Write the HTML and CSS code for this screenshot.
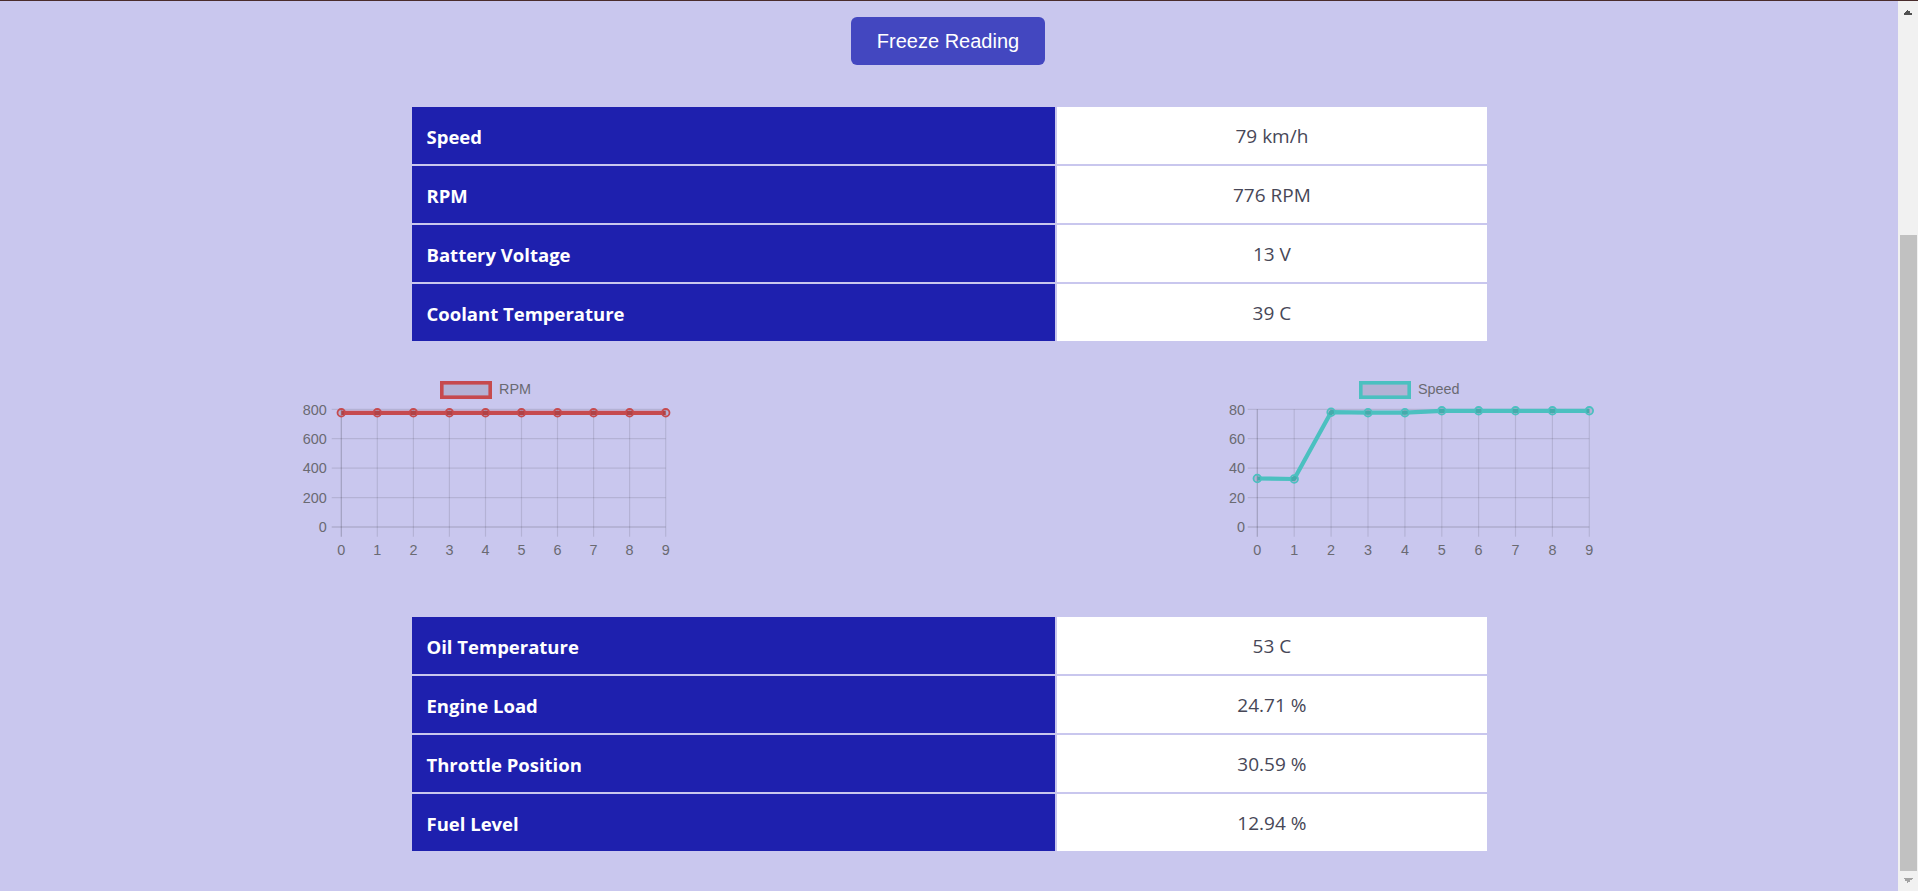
FILE: index.html
```html
<!DOCTYPE html>
<html lang="en">
<head>
<meta charset="utf-8">
<title>Live Readings</title>
<link rel="stylesheet" href="styles.css">
</head>
<body>
<div class="frame">
<div class="viewport">
  <div class="page">
    <header class="page-top"></header>

    <div class="controls">
      <button class="freeze-btn" type="button">Freeze Reading</button>
    </div>

    <table class="readings">
      <tr><th>Speed</th><td>79 km/h</td></tr>
      <tr><th>RPM</th><td>776 RPM</td></tr>
      <tr><th>Battery Voltage</th><td>13 V</td></tr>
      <tr><th>Coolant Temperature</th><td>39 C</td></tr>
    </table>

    <section class="charts">
      <figure class="chart chart-rpm">
        <svg width="371" height="194" viewBox="0 0 371 194">
          <rect class="legend-box red" x="141.8" y="14.8" width="48.4" height="14.4"/>
          <text class="legend-text" x="199" y="26.3">RPM</text>
          <g class="grid">
            <line x1="31.7" y1="41.3" x2="365.7" y2="41.3"/>
            <line x1="31.7" y1="70.7" x2="365.7" y2="70.7"/>
            <line x1="31.7" y1="100.2" x2="365.7" y2="100.2"/>
            <line x1="31.7" y1="129.6" x2="365.7" y2="129.6"/>
            <line x1="77.3" y1="41.3" x2="77.3" y2="168.7"/>
            <line x1="113.4" y1="41.3" x2="113.4" y2="168.7"/>
            <line x1="149.4" y1="41.3" x2="149.4" y2="168.7"/>
            <line x1="185.5" y1="41.3" x2="185.5" y2="168.7"/>
            <line x1="221.5" y1="41.3" x2="221.5" y2="168.7"/>
            <line x1="257.5" y1="41.3" x2="257.5" y2="168.7"/>
            <line x1="293.6" y1="41.3" x2="293.6" y2="168.7"/>
            <line x1="329.6" y1="41.3" x2="329.6" y2="168.7"/>
            <line x1="365.7" y1="41.3" x2="365.7" y2="168.7"/>
          </g>
          <g class="axis">
            <line x1="31.7" y1="159" x2="365.7" y2="159"/>
            <line x1="41.3" y1="41.3" x2="41.3" y2="168.7"/>
          </g>
          <g class="ticks y-ticks">
            <text x="26.7" y="46.5">800</text>
            <text x="26.7" y="75.9">600</text>
            <text x="26.7" y="105.4">400</text>
            <text x="26.7" y="134.8">200</text>
            <text x="26.7" y="164.2">0</text>
          </g>
          <g class="ticks x-ticks">
            <text x="41.3" y="187">0</text>
            <text x="77.3" y="187">1</text>
            <text x="113.4" y="187">2</text>
            <text x="149.4" y="187">3</text>
            <text x="185.5" y="187">4</text>
            <text x="221.5" y="187">5</text>
            <text x="257.5" y="187">6</text>
            <text x="293.6" y="187">7</text>
            <text x="329.6" y="187">8</text>
            <text x="365.7" y="187">9</text>
          </g>
          <polyline class="series red" points="41.3,44.8 77.3,44.8 113.4,44.8 149.4,44.8 185.5,44.8 221.5,44.8 257.5,44.8 293.6,44.8 329.6,44.8 365.7,44.8"/>
          <g class="dots red">
            <circle cx="41.3" cy="44.8" r="3.8"/><circle cx="77.3" cy="44.8" r="3.8"/>
            <circle cx="113.4" cy="44.8" r="3.8"/><circle cx="149.4" cy="44.8" r="3.8"/>
            <circle cx="185.5" cy="44.8" r="3.8"/><circle cx="221.5" cy="44.8" r="3.8"/>
            <circle cx="257.5" cy="44.8" r="3.8"/><circle cx="293.6" cy="44.8" r="3.8"/>
            <circle cx="329.6" cy="44.8" r="3.8"/><circle cx="365.7" cy="44.8" r="3.8"/>
          </g>
        </svg>
      </figure>

      <figure class="chart chart-speed">
        <svg width="369" height="194" viewBox="0 0 369 194">
          <rect class="legend-box teal" x="135.8" y="14.8" width="48.4" height="14.4"/>
          <text class="legend-text" x="193" y="26.3">Speed</text>
          <g class="grid">
            <line x1="22.7" y1="41.3" x2="364.3" y2="41.3"/>
            <line x1="22.7" y1="70.7" x2="364.3" y2="70.7"/>
            <line x1="22.7" y1="100.2" x2="364.3" y2="100.2"/>
            <line x1="22.7" y1="129.6" x2="364.3" y2="129.6"/>
            <line x1="69.2" y1="41.3" x2="69.2" y2="168.7"/>
            <line x1="106.1" y1="41.3" x2="106.1" y2="168.7"/>
            <line x1="143" y1="41.3" x2="143" y2="168.7"/>
            <line x1="179.9" y1="41.3" x2="179.9" y2="168.7"/>
            <line x1="216.8" y1="41.3" x2="216.8" y2="168.7"/>
            <line x1="253.6" y1="41.3" x2="253.6" y2="168.7"/>
            <line x1="290.5" y1="41.3" x2="290.5" y2="168.7"/>
            <line x1="327.4" y1="41.3" x2="327.4" y2="168.7"/>
            <line x1="364.3" y1="41.3" x2="364.3" y2="168.7"/>
          </g>
          <g class="axis">
            <line x1="22.7" y1="159" x2="364.3" y2="159"/>
            <line x1="32.3" y1="41.3" x2="32.3" y2="168.7"/>
          </g>
          <g class="ticks y-ticks">
            <text x="20" y="46.5">80</text>
            <text x="20" y="75.9">60</text>
            <text x="20" y="105.4">40</text>
            <text x="20" y="134.8">20</text>
            <text x="20" y="164.2">0</text>
          </g>
          <g class="ticks x-ticks">
            <text x="32.3" y="187">0</text>
            <text x="69.2" y="187">1</text>
            <text x="106.1" y="187">2</text>
            <text x="143" y="187">3</text>
            <text x="179.9" y="187">4</text>
            <text x="216.8" y="187">5</text>
            <text x="253.6" y="187">6</text>
            <text x="290.5" y="187">7</text>
            <text x="327.4" y="187">8</text>
            <text x="364.3" y="187">9</text>
          </g>
          <polyline class="series teal" points="32.3,110.5 69.2,111 106.1,44.2 143,44.7 179.9,44.7 216.8,42.8 253.6,42.8 290.5,42.8 327.4,42.8 364.3,42.8"/>
          <g class="dots teal">
            <circle cx="32.3" cy="110.5" r="3.8"/><circle cx="69.2" cy="111" r="3.8"/>
            <circle cx="106.1" cy="44.2" r="3.8"/><circle cx="143" cy="44.7" r="3.8"/>
            <circle cx="179.9" cy="44.7" r="3.8"/><circle cx="216.8" cy="42.8" r="3.8"/>
            <circle cx="253.6" cy="42.8" r="3.8"/><circle cx="290.5" cy="42.8" r="3.8"/>
            <circle cx="327.4" cy="42.8" r="3.8"/><circle cx="364.3" cy="42.8" r="3.8"/>
          </g>
        </svg>
      </figure>
    </section>

    <table class="readings readings-lower">
      <tr><th>Oil Temperature</th><td>53 C</td></tr>
      <tr><th>Engine Load</th><td>24.71 %</td></tr>
      <tr><th>Throttle Position</th><td>30.59 %</td></tr>
      <tr><th>Fuel Level</th><td>12.94 %</td></tr>
    </table>
  </div>
</div>
<div class="scroll-rail" aria-hidden="true">
  <span class="rail-btn rail-up"></span>
  <span class="rail-track"><span class="rail-thumb"></span></span>
  <span class="rail-btn rail-down"></span>
</div>
</div>
</body>
</html>
```

FILE: styles.css
```css
html, body {
  margin: 0;
  padding: 0;
  height: 100%;
  overflow: hidden;
}

body {
  background: #c9c7ee;
  font-family: "Open Sans", "Noto Sans", sans-serif;
}

.frame {
  box-sizing: border-box;
  height: 100vh;
  display: flex;
  border-top: 1px solid #4a2c2c;
}

.viewport {
  flex: 1;
  min-width: 0;
  overflow-y: scroll;
  scrollbar-width: none;
  display: flex;
  flex-direction: column-reverse;
  background: #c9c7ee;
}

.viewport::-webkit-scrollbar {
  display: none;
}

.scroll-rail {
  flex: none;
  width: 20px;
  display: flex;
  flex-direction: column;
  background: #f1f1f1;
}

.rail-btn {
  flex: none;
  height: 20px;
  background-repeat: no-repeat;
}

.rail-up {
  background-image:
    linear-gradient(to top left, #505050 50%, transparent 50%),
    linear-gradient(to top right, #505050 50%, transparent 50%);
  background-size: 5px 5px, 5px 5px;
  background-position: 5px 9px, 10px 9px;
}

.rail-down {
  background-image:
    linear-gradient(to bottom left, #a3a3a3 50%, transparent 50%),
    linear-gradient(to bottom right, #a3a3a3 50%, transparent 50%);
  background-size: 5px 5px, 5px 5px;
  background-position: 5px 7px, 10px 7px;
}

.rail-track {
  flex: 1;
  display: flex;
  flex-direction: column;
  justify-content: flex-end;
}

.rail-thumb {
  height: 636px;
  margin: 0 1px 0 2px;
  background: #c1c1c1;
}

.page {
  flex: none;
  padding-bottom: 38px;
}

.page-top {
  height: 301px;
}

.controls {
  display: flex;
  justify-content: center;
  padding-top: 16px;
}

.freeze-btn {
  height: 48px;
  padding: 0 26px;
  margin-right: 2px;
  border: none;
  border-radius: 6px;
  background: #4347c0;
  color: #ffffff;
  font-family: "Liberation Sans", Arial, sans-serif;
  font-size: 20px;
  cursor: pointer;
}

.readings {
  width: 1079px;
  margin: 40px auto 0;
  border-collapse: separate;
  border-spacing: 2px;
}

.readings-lower {
  margin-top: 53px;
}

.readings th,
.readings td {
  height: 57px;
  padding: 0 15px;
  box-sizing: border-box;
  vertical-align: middle;
}

.readings th {
  width: 60%;
  background: #1e20ae;
  color: #ffffff;
  text-align: left;
  font-weight: 700;
  font-size: 18.5px;
  padding-top: 1px;
}

.readings td {
  background: #ffffff;
  color: #474757;
  text-align: center;
  font-weight: 400;
  font-size: 19px;
  padding-top: 1px;
}

.charts {
  display: flex;
  justify-content: space-between;
  margin: 25px 0 0;
  padding: 0 304px 0 300px;
}

.chart {
  margin: 0;
  height: 194px;
}

.chart svg {
  display: block;
}

.grid line {
  stroke: rgba(0, 0, 0, 0.1);
  stroke-width: 1.2;
}

.axis line {
  stroke: rgba(0, 0, 0, 0.2);
  stroke-width: 1.2;
}

.ticks text,
.legend-text {
  font-family: "Liberation Sans", Arial, sans-serif;
  font-size: 14.4px;
  fill: #6a6a72;
}

.y-ticks text {
  text-anchor: end;
}

.x-ticks text {
  text-anchor: middle;
}

.legend-box {
  fill: rgba(0, 0, 0, 0.1);
  stroke-width: 3.6;
}

.legend-box.red { stroke: #c64a4e; }
.legend-box.teal { stroke: #4bc0c0; }

.series {
  fill: none;
  stroke-width: 4.2;
  stroke-linejoin: round;
}

.series.red { stroke: #c64a4e; }
.series.teal { stroke: #4bc0c0; }

.dots circle {
  fill: rgba(0, 0, 0, 0.1);
  stroke-width: 1.8;
}

.dots.red circle { stroke: #c64a4e; }
.dots.teal circle { stroke: #4bc0c0; }
```
